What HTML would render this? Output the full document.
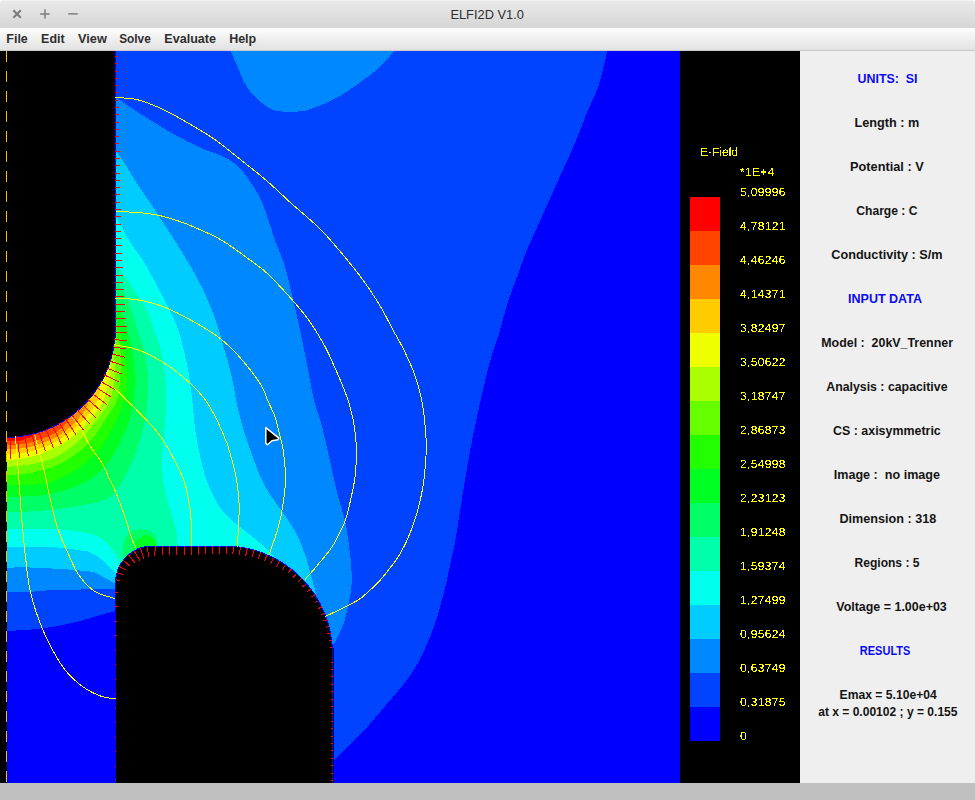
<!DOCTYPE html>
<html><head><meta charset="utf-8"><title>ELFI2D V1.0</title>
<style>
html,body{margin:0;padding:0;}
body{width:975px;height:800px;overflow:hidden;background:#c0c0c0;position:relative;font-family:"Liberation Sans",sans-serif;}
#tbb{position:absolute;left:0;top:0;width:975px;height:10px;background:#fff;}
#tb{position:absolute;left:0;top:0;width:975px;height:28px;background:linear-gradient(#f6f6f6 0px,#e9e9e9 1.5px,#d6d6d6 28px);border-radius:4px 4px 0 0;}
#mb{position:absolute;left:0;top:28px;width:975px;height:22px;background:linear-gradient(#fdfdfd,#e2e2e2);border-bottom:1px solid #c9c9c9;}
#cv{position:absolute;left:0;top:51px;}
#pn{position:absolute;left:800px;top:51px;}
</style></head><body>
<div id="tbb"></div><div id="tb"><svg width="100" height="28" style="position:absolute;left:0;top:0"><g stroke="#7d7d7d" fill="none" stroke-linecap="butt"><path d="M13.3,10.2L20.8,17.7M20.8,10.2L13.3,17.7" stroke-width="2.1"/><path d="M40.2,13.9H49.7M45,9.2V18.5" stroke-width="1.5"/><path d="M68.2,13.9H77.7" stroke-width="1.5"/></g></svg></div>
<div id="mb"></div>
<svg id="tx" width="975" height="51" style="position:absolute;left:0;top:0" font-family="'Liberation Sans', sans-serif">
<text x="450.4" y="19.2" font-size="13.5px" fill="#2e2e2e" textLength="73.6" lengthAdjust="spacingAndGlyphs">ELFI2D V1.0</text>
<g font-size="12.9px" font-weight="bold" fill="#2e2e2e">
<text x="6.3" y="43" textLength="21.5" lengthAdjust="spacingAndGlyphs">File</text>
<text x="41.1" y="43" textLength="23.5" lengthAdjust="spacingAndGlyphs">Edit</text>
<text x="78.1" y="43" textLength="28.7" lengthAdjust="spacingAndGlyphs">View</text>
<text x="119.2" y="43" textLength="31.6" lengthAdjust="spacingAndGlyphs">Solve</text>
<text x="164.3" y="43" textLength="51.7" lengthAdjust="spacingAndGlyphs">Evaluate</text>
<text x="229.2" y="43" textLength="27" lengthAdjust="spacingAndGlyphs">Help</text>
</g></svg>
<svg id="cv" width="800" height="732" viewBox="0 51 800 732" shape-rendering="crispEdges">
<rect x="0" y="51" width="800" height="732" fill="#000"/>
<defs><clipPath id="pc"><rect x="7" y="51" width="673" height="732"/></clipPath></defs>
<g clip-path="url(#pc)">
<rect x="7" y="51" width="673" height="732" fill="#0000ff"/>
<polygon fill="#0044ff" points="7.0,51.0 607.4,51.0 606.5,54.5 605.6,58.2 604.8,61.8 603.9,65.5 603.0,69.1 602.1,72.7 601.2,76.2 600.3,79.6 599.4,82.9 598.4,86.0 597.4,88.9 596.4,91.5 595.4,93.9 594.4,96.2 593.4,98.4 592.3,100.7 591.2,103.0 590.1,105.5 588.9,108.1 587.7,111.0 586.4,114.1 585.1,117.4 583.8,120.9 582.4,124.4 581.0,128.1 579.5,131.8 578.0,135.6 576.5,139.4 574.9,143.2 573.3,147.0 571.6,150.8 569.9,154.8 568.1,158.8 566.2,162.9 564.3,166.9 562.5,171.0 560.6,175.0 558.8,178.9 557.1,182.7 555.4,186.4 553.8,189.9 552.3,193.3 550.8,196.6 549.4,199.8 548.0,203.0 546.6,206.1 545.2,209.2 543.8,212.4 542.4,215.5 541.0,218.7 539.5,221.9 538.1,225.2 536.6,228.5 535.1,231.8 533.6,235.1 532.1,238.3 530.6,241.6 529.2,244.8 527.9,247.9 526.6,251.0 525.4,254.0 524.2,257.0 523.1,260.0 522.0,262.9 521.0,265.8 519.9,268.6 518.9,271.5 518.0,274.2 517.0,277.0 516.0,279.7 515.0,282.4 514.1,285.0 513.1,287.5 512.2,290.1 511.3,292.6 510.4,295.1 509.5,297.5 508.6,300.0 507.8,302.5 507.0,305.0 506.2,307.5 505.5,310.0 504.8,312.4 504.2,314.8 503.5,317.3 502.9,319.7 502.2,322.2 501.5,324.8 500.8,327.4 500.0,330.0 499.2,332.7 498.3,335.5 497.3,338.3 496.4,341.2 495.4,344.1 494.4,347.0 493.5,350.0 492.5,352.9 491.6,355.8 490.8,358.7 490.0,361.6 489.2,364.4 488.5,367.2 487.8,370.0 487.1,372.8 486.4,375.7 485.7,378.5 485.0,381.4 484.3,384.4 483.6,387.4 482.9,390.5 482.2,393.6 481.4,396.7 480.7,399.9 480.0,403.1 479.3,406.3 478.6,409.6 477.8,413.0 477.1,416.3 476.4,419.7 475.7,423.1 475.0,426.5 474.2,430.0 473.5,433.5 472.8,437.0 472.1,440.5 471.4,444.2 470.6,447.9 469.9,451.7 469.2,455.6 468.5,459.6 467.8,463.8 467.0,468.0 466.3,472.3 465.6,476.7 464.9,481.1 464.1,485.5 463.4,490.0 462.7,494.4 462.0,498.7 461.3,503.1 460.5,507.7 459.8,512.4 459.1,517.1 458.3,521.7 457.6,526.2 456.9,530.6 456.2,534.7 455.6,538.4 455.0,541.8 454.5,544.7 454.0,547.0 453.6,549.0 453.3,550.8 452.9,552.3 452.6,553.8 452.2,555.4 451.8,557.1 451.3,559.1 450.8,561.5 450.2,564.2 449.6,567.1 449.0,570.2 448.3,573.3 447.6,576.6 446.9,580.0 446.1,583.4 445.3,586.9 444.5,590.4 443.6,593.8 442.7,597.3 441.7,600.8 440.7,604.4 439.7,608.1 438.7,611.7 437.6,615.4 436.4,619.1 435.2,622.7 434.0,626.2 432.8,629.7 431.5,633.1 430.2,636.6 428.7,640.0 427.3,643.4 425.8,646.7 424.3,650.0 422.8,653.2 421.3,656.3 419.9,659.2 418.4,662.0 417.0,664.6 415.6,667.0 414.2,669.3 412.8,671.4 411.4,673.5 410.0,675.5 408.6,677.5 407.1,679.5 405.6,681.5 404.0,683.6 402.4,685.7 400.7,687.8 399.0,689.9 397.2,692.0 395.4,694.1 393.6,696.2 391.8,698.3 389.9,700.5 388.0,702.7 386.0,705.0 384.0,707.4 381.9,709.9 379.7,712.5 377.5,715.1 375.3,717.7 373.1,720.3 370.9,722.9 368.7,725.4 366.6,727.8 364.6,730.0 362.6,732.1 360.7,734.1 358.8,736.1 357.0,737.9 355.2,739.7 353.4,741.5 351.7,743.2 350.0,744.8 348.3,746.4 346.7,748.0 345.2,749.5 343.7,751.0 342.3,752.4 340.9,753.7 339.6,755.0 338.3,756.3 337.0,757.6 335.7,758.9 334.4,760.2 333.0,761.5 300.0,761.5 200.0,700.0 116.0,611.0 114.3,611.4 112.7,611.9 111.0,612.3 109.4,612.7 107.8,613.2 106.1,613.6 104.4,614.0 102.7,614.5 100.9,615.0 99.0,615.5 97.1,616.0 95.1,616.6 93.1,617.2 91.0,617.8 88.9,618.5 86.8,619.1 84.6,619.7 82.5,620.3 80.2,620.9 78.0,621.5 75.7,622.1 73.4,622.6 71.0,623.2 68.6,623.7 66.2,624.2 63.7,624.8 61.3,625.3 58.8,625.7 56.4,626.2 54.0,626.6 51.6,627.0 49.2,627.4 46.8,627.7 44.4,628.0 41.9,628.3 39.5,628.6 37.1,628.9 34.7,629.1 32.4,629.4 30.0,629.6 27.7,629.8 25.3,630.0 23.0,630.1 20.7,630.3 18.4,630.4 16.2,630.5 13.9,630.6 11.6,630.7 9.3,630.9 7.0,631.0 7.0,51.0"/>
<polygon fill="#0088ff" points="7.0,97.0 115.0,97.0 116.8,98.2 118.6,99.4 120.4,100.6 122.2,101.8 124.0,103.0 125.8,104.2 127.6,105.4 129.4,106.6 131.2,107.8 133.0,109.0 134.8,110.2 136.5,111.3 138.1,112.4 139.8,113.4 141.5,114.5 143.2,115.6 145.0,116.8 146.9,118.0 148.9,119.2 151.0,120.5 153.3,121.9 155.7,123.4 158.2,124.9 160.8,126.5 163.5,128.2 166.2,129.8 169.0,131.4 171.7,133.0 174.4,134.5 177.0,136.0 179.6,137.4 182.2,138.8 184.9,140.2 187.5,141.5 190.1,142.8 192.8,144.1 195.3,145.3 197.8,146.5 200.3,147.6 202.6,148.7 204.9,149.7 207.1,150.5 209.3,151.3 211.4,152.0 213.4,152.7 215.4,153.4 217.4,154.1 219.3,154.8 221.2,155.5 223.0,156.4 224.8,157.3 226.5,158.2 228.1,159.1 229.7,160.0 231.2,161.0 232.8,162.0 234.2,163.1 235.7,164.2 237.1,165.4 238.5,166.7 239.9,168.1 241.2,169.5 242.5,171.1 243.8,172.7 245.1,174.4 246.3,176.1 247.5,177.8 248.7,179.5 249.8,181.3 251.0,183.0 252.1,184.7 253.3,186.4 254.4,188.2 255.5,189.9 256.6,191.7 257.6,193.5 258.6,195.3 259.6,197.2 260.6,199.1 261.5,201.0 262.4,203.0 263.2,205.0 264.0,207.1 264.7,209.2 265.5,211.3 266.2,213.5 266.9,215.6 267.6,217.8 268.3,219.9 269.0,222.0 269.7,224.1 270.4,226.2 271.1,228.2 271.8,230.3 272.4,232.4 273.1,234.5 273.8,236.6 274.5,238.7 275.2,240.8 276.0,243.0 276.8,245.2 277.6,247.3 278.5,249.4 279.4,251.5 280.3,253.7 281.1,255.9 282.0,258.2 282.9,260.5 283.8,263.0 284.6,265.6 285.4,268.3 286.2,271.2 287.0,274.2 287.7,277.2 288.5,280.3 289.3,283.5 290.0,286.7 290.8,289.9 291.5,293.2 292.3,296.4 293.1,299.6 293.8,302.8 294.6,306.0 295.4,309.3 296.1,312.6 296.9,315.9 297.7,319.3 298.5,322.7 299.2,326.2 300.0,329.7 300.8,333.4 301.6,337.1 302.4,341.0 303.1,345.0 303.9,348.9 304.7,352.9 305.5,356.8 306.2,360.7 307.0,364.4 307.7,368.0 308.4,371.5 309.0,374.9 309.6,378.3 310.2,381.6 310.8,384.8 311.4,388.0 312.0,391.1 312.7,394.1 313.3,397.1 314.0,400.0 314.7,402.8 315.5,405.4 316.2,407.9 317.0,410.3 317.8,412.7 318.6,415.1 319.4,417.5 320.2,420.1 321.0,422.8 321.8,425.6 322.6,428.6 323.3,431.8 324.1,435.0 324.9,438.4 325.7,441.8 326.4,445.3 327.2,448.7 328.0,452.2 328.7,455.6 329.5,459.0 330.3,462.4 331.0,465.7 331.8,469.2 332.5,472.6 333.2,476.0 334.0,479.4 334.7,482.7 335.5,486.0 336.2,489.2 337.0,492.3 337.8,495.3 338.6,498.3 339.5,501.3 340.3,504.2 341.2,507.0 342.0,509.8 342.8,512.6 343.6,515.3 344.3,517.9 344.9,520.5 345.5,523.0 345.9,525.4 346.4,527.8 346.8,530.1 347.1,532.4 347.5,534.6 347.8,536.8 348.1,539.1 348.4,541.3 348.7,543.6 349.0,545.9 349.3,548.3 349.6,550.7 349.9,553.1 350.2,555.5 350.5,557.8 350.7,560.1 351.0,562.4 351.1,564.6 351.3,566.7 351.4,568.8 351.5,570.8 351.6,572.8 351.6,574.7 351.7,576.6 351.7,578.4 351.6,580.2 351.6,581.9 351.6,583.5 351.5,585.0 351.4,586.3 351.4,587.5 351.3,588.5 351.2,589.3 351.1,590.2 350.9,591.1 350.8,592.0 350.6,593.1 350.3,594.4 350.0,596.0 349.7,597.8 349.3,599.9 348.8,602.2 348.4,604.6 347.9,607.1 347.3,609.6 346.8,612.1 346.2,614.5 345.6,616.8 345.0,619.0 344.4,621.0 343.7,623.1 342.9,625.1 342.2,627.0 341.4,628.9 340.6,630.7 339.8,632.4 339.1,634.1 338.4,635.6 337.7,637.0 337.1,638.3 336.5,639.4 335.9,640.4 335.4,641.2 334.9,642.1 334.4,642.8 333.9,643.6 333.3,644.3 332.8,645.1 332.3,646.0 300.0,650.0 200.0,620.0 116.0,588.5 112.8,588.6 109.6,588.7 106.3,588.8 103.1,588.9 99.9,589.0 96.7,589.1 93.5,589.2 90.3,589.2 87.1,589.3 84.0,589.4 80.9,589.5 77.8,589.5 74.7,589.6 71.6,589.6 68.5,589.6 65.5,589.7 62.5,589.7 59.6,589.8 56.7,589.9 54.0,590.0 51.4,590.1 48.8,590.3 46.3,590.5 43.9,590.7 41.6,590.9 39.2,591.1 36.9,591.3 34.6,591.5 32.3,591.7 30.0,591.8 27.7,591.9 25.3,592.0 23.0,592.1 20.7,592.1 18.4,592.2 16.2,592.2 13.9,592.3 11.6,592.3 9.3,592.3 7.0,592.4 7.0,97.0"/>
<polygon fill="#0088ff" points="230.7,51.0 231.4,52.5 232.0,54.0 232.7,55.6 233.4,57.1 234.0,58.6 234.7,60.1 235.4,61.6 236.1,63.2 236.8,64.8 237.5,66.4 238.2,68.1 239.0,69.9 239.7,71.7 240.5,73.5 241.2,75.4 242.0,77.2 242.8,79.0 243.6,80.8 244.4,82.4 245.3,84.0 246.2,85.5 247.1,86.9 248.0,88.3 248.9,89.6 249.9,90.8 250.9,92.1 251.9,93.3 252.9,94.4 253.9,95.6 255.0,96.7 256.1,97.8 257.3,98.9 258.5,100.0 259.7,101.0 260.9,102.1 262.1,103.0 263.3,104.0 264.5,104.8 265.7,105.7 266.8,106.4 267.8,107.1 268.8,107.7 269.7,108.3 270.6,108.8 271.5,109.2 272.4,109.6 273.4,110.0 274.4,110.3 275.4,110.6 276.5,110.9 277.7,111.1 279.0,111.3 280.3,111.4 281.6,111.5 283.0,111.5 284.4,111.5 285.8,111.5 287.2,111.5 288.6,111.5 290.0,111.5 291.4,111.5 292.7,111.5 294.1,111.5 295.5,111.5 296.9,111.5 298.3,111.5 299.7,111.4 301.0,111.3 302.4,111.1 303.8,110.9 305.1,110.6 306.5,110.3 307.7,110.0 309.0,109.6 310.3,109.2 311.6,108.7 313.0,108.2 314.4,107.6 315.9,107.0 317.5,106.4 319.2,105.7 321.0,105.0 322.9,104.2 324.9,103.4 326.9,102.5 328.9,101.6 331.0,100.7 333.0,99.7 335.0,98.7 337.0,97.6 338.9,96.5 340.9,95.4 342.9,94.2 344.8,92.9 346.8,91.7 348.7,90.4 350.6,89.1 352.6,87.7 354.6,86.4 356.5,85.0 358.5,83.6 360.5,82.1 362.6,80.6 364.7,79.1 366.7,77.6 368.8,76.1 370.7,74.6 372.6,73.1 374.4,71.7 376.0,70.3 377.5,69.0 378.9,67.7 380.2,66.4 381.4,65.2 382.6,64.0 383.7,62.8 384.7,61.7 385.7,60.6 386.7,59.6 387.6,58.6 388.5,57.7 389.3,56.8 390.0,56.0 390.7,55.3 391.3,54.5 392.0,53.8 392.6,53.2 393.2,52.5 393.8,51.7 394.5,51.0 394.5,40.0 230.7,40.0"/>
<polygon fill="#00ccff" points="7.0,148.7 115.0,148.7 116.0,150.3 117.1,151.9 118.1,153.4 119.1,155.0 120.2,156.6 121.2,158.1 122.3,159.8 123.3,161.4 124.4,163.2 125.6,165.0 126.8,166.9 128.0,168.9 129.3,171.0 130.6,173.2 131.9,175.4 133.3,177.6 134.6,179.8 135.9,181.9 137.2,184.0 138.5,186.0 139.8,187.9 141.0,189.8 142.3,191.6 143.5,193.3 144.7,195.1 146.0,196.8 147.2,198.5 148.5,200.3 149.7,202.1 151.0,204.0 152.3,205.9 153.6,207.9 154.9,210.0 156.3,212.0 157.6,214.1 159.0,216.2 160.3,218.2 161.6,220.2 162.8,222.2 164.0,224.0 165.1,225.7 166.2,227.4 167.2,229.0 168.2,230.5 169.2,232.0 170.2,233.5 171.2,235.0 172.2,236.6 173.3,238.2 174.4,240.0 175.6,241.8 176.7,243.7 177.9,245.6 179.1,247.5 180.4,249.5 181.6,251.5 182.9,253.6 184.3,255.8 185.6,258.1 187.0,260.5 188.5,263.0 190.0,265.6 191.5,268.3 193.2,271.1 194.8,274.0 196.4,276.9 198.0,279.8 199.6,282.8 201.1,285.7 202.6,288.7 204.0,291.7 205.4,294.8 206.8,297.9 208.2,301.1 209.5,304.3 210.8,307.4 212.0,310.6 213.2,313.6 214.3,316.6 215.4,319.5 216.4,322.3 217.2,324.9 218.1,327.5 218.8,330.0 219.5,332.4 220.2,334.9 220.9,337.3 221.6,339.8 222.3,342.4 223.0,345.0 223.8,347.7 224.6,350.4 225.4,353.1 226.2,355.9 227.0,358.7 227.8,361.5 228.6,364.3 229.3,367.2 230.1,370.1 230.8,373.0 231.5,376.0 232.2,379.2 232.8,382.4 233.4,385.6 234.1,388.9 234.7,392.1 235.3,395.3 235.8,398.4 236.4,401.3 237.0,404.0 237.5,406.5 238.0,408.8 238.5,410.9 238.9,412.9 239.4,414.8 239.9,416.7 240.4,418.7 240.9,420.8 241.6,423.1 242.3,425.6 243.1,428.3 244.0,431.3 245.0,434.3 246.1,437.5 247.1,440.8 248.2,444.0 249.4,447.3 250.5,450.4 251.6,453.5 252.6,456.4 253.6,459.2 254.6,461.9 255.6,464.6 256.6,467.3 257.5,469.8 258.5,472.4 259.6,474.9 260.6,477.3 261.7,479.7 262.8,482.0 264.0,484.3 265.2,486.5 266.4,488.6 267.7,490.7 269.0,492.8 270.3,494.8 271.7,496.8 273.0,498.7 274.3,500.7 275.6,502.6 276.9,504.5 278.2,506.4 279.5,508.2 280.9,509.9 282.2,511.7 283.5,513.5 284.8,515.2 286.1,517.0 287.3,518.7 288.5,520.5 289.6,522.3 290.8,524.1 291.8,525.8 292.9,527.6 293.9,529.3 294.9,531.1 295.9,532.9 296.9,534.7 297.8,536.6 298.7,538.5 299.6,540.5 300.4,542.5 301.3,544.5 302.1,546.6 302.9,548.8 303.6,550.9 304.4,553.0 305.1,555.0 305.7,557.0 306.4,559.0 307.0,560.9 307.6,562.8 308.1,564.6 308.7,566.4 309.1,568.2 309.6,570.0 310.1,571.8 310.6,573.5 311.0,575.3 311.5,577.0 312.0,578.7 312.4,580.5 312.9,582.2 313.3,583.9 313.8,585.6 314.2,587.2 314.7,588.9 315.1,590.6 315.6,592.3 316.0,594.0 290.0,600.0 200.0,600.0 116.0,584.0 115.0,583.5 114.0,582.9 113.0,582.4 112.1,581.9 111.1,581.4 110.1,580.8 109.1,580.3 108.1,579.8 107.2,579.3 106.2,578.8 105.3,578.2 104.4,577.7 103.5,577.1 102.6,576.6 101.7,576.1 100.9,575.5 100.0,575.0 99.2,574.6 98.3,574.1 97.5,573.8 96.8,573.4 96.3,573.1 95.9,572.9 95.5,572.7 95.1,572.5 94.6,572.3 93.9,572.1 92.9,571.9 91.7,571.7 90.0,571.5 87.9,571.3 85.4,571.0 82.7,570.7 79.6,570.5 76.4,570.2 73.1,569.9 69.7,569.7 66.4,569.4 63.1,569.2 60.0,569.0 57.0,568.8 53.9,568.6 50.8,568.4 47.7,568.3 44.6,568.1 41.5,567.9 38.5,567.8 35.6,567.7 32.7,567.6 30.0,567.5 27.4,567.4 25.0,567.4 22.6,567.4 20.3,567.4 18.1,567.4 15.9,567.4 13.7,567.5 11.5,567.5 9.3,567.5 7.0,567.5 7.0,148.7"/>
<polygon fill="#00ffee" points="7.0,214.0 115.0,214.0 116.0,215.9 117.0,217.9 118.1,219.9 119.1,221.9 120.2,223.9 121.2,225.9 122.2,227.8 123.2,229.6 124.1,231.4 125.0,233.0 125.8,234.5 126.5,235.8 127.2,237.0 127.8,238.2 128.5,239.2 129.1,240.3 129.7,241.4 130.4,242.5 131.2,243.7 132.0,245.0 132.9,246.4 133.9,247.8 135.0,249.2 136.0,250.6 137.2,252.1 138.3,253.6 139.4,255.2 140.5,256.8 141.6,258.4 142.7,260.0 143.7,261.7 144.8,263.4 145.8,265.2 146.8,267.0 147.8,268.8 148.8,270.7 149.8,272.5 150.8,274.4 151.8,276.2 152.8,278.0 153.8,279.8 154.8,281.6 155.8,283.4 156.7,285.2 157.7,287.1 158.7,288.9 159.6,290.7 160.6,292.5 161.5,294.2 162.4,296.0 163.3,297.7 164.2,299.5 165.1,301.2 165.9,302.9 166.8,304.6 167.6,306.2 168.5,307.9 169.3,309.6 170.1,311.3 170.9,313.0 171.7,314.7 172.5,316.4 173.3,318.0 174.0,319.7 174.8,321.3 175.6,323.0 176.3,324.7 177.0,326.4 177.7,328.2 178.3,330.0 178.9,331.8 179.5,333.7 180.0,335.7 180.6,337.6 181.1,339.6 181.6,341.6 182.1,343.6 182.5,345.6 183.0,347.5 183.5,349.5 184.0,351.4 184.5,353.4 184.9,355.3 185.4,357.2 185.9,359.2 186.3,361.1 186.8,363.0 187.2,365.0 187.6,367.0 188.0,369.0 188.4,371.0 188.7,373.1 189.0,375.2 189.3,377.4 189.6,379.5 189.9,381.6 190.2,383.8 190.5,385.9 190.7,388.0 191.0,390.0 191.3,392.0 191.5,394.0 191.7,396.0 192.0,397.9 192.2,399.8 192.4,401.8 192.6,403.7 192.8,405.6 193.0,407.6 193.2,409.5 193.4,411.5 193.6,413.5 193.8,415.6 194.0,417.7 194.1,419.8 194.3,421.8 194.5,423.8 194.6,425.6 194.8,427.4 195.0,429.0 195.2,430.4 195.4,431.7 195.6,432.9 195.8,434.0 196.0,435.0 196.2,436.0 196.4,437.0 196.6,437.9 196.8,438.9 197.0,440.0 197.2,441.0 197.3,442.0 197.5,442.8 197.6,443.7 197.7,444.6 197.9,445.5 198.1,446.6 198.3,447.8 198.6,449.3 199.0,451.0 199.4,453.0 199.9,455.2 200.5,457.7 201.1,460.3 201.7,463.1 202.3,465.9 203.1,468.8 203.8,471.6 204.6,474.3 205.5,477.0 206.4,479.6 207.4,482.3 208.5,485.0 209.6,487.8 210.7,490.5 211.9,493.1 213.1,495.7 214.3,498.1 215.5,500.5 216.7,502.6 217.9,504.6 219.1,506.4 220.3,508.1 221.6,509.6 222.8,511.1 224.1,512.5 225.4,513.9 226.7,515.2 228.1,516.6 229.5,518.0 230.9,519.4 232.5,520.8 234.0,522.1 235.6,523.4 237.2,524.7 238.8,526.0 240.4,527.2 241.9,528.4 243.5,529.6 244.9,530.8 246.3,531.9 247.6,533.0 248.9,534.0 250.2,535.0 251.5,536.0 252.7,536.9 253.9,537.9 255.2,538.9 256.4,539.9 257.7,541.0 259.0,542.1 260.3,543.2 261.7,544.4 263.1,545.5 264.4,546.7 265.8,547.9 267.0,549.1 268.3,550.3 269.4,551.4 270.5,552.6 271.5,553.7 272.3,554.9 273.1,556.0 273.9,557.2 274.6,558.3 275.3,559.4 275.9,560.6 276.6,561.7 277.3,562.9 278.0,564.0 260.0,575.0 180.0,575.0 116.0,573.8 115.7,573.4 115.4,573.1 115.1,572.7 114.8,572.4 114.5,572.1 114.2,571.8 113.8,571.4 113.5,571.0 113.0,570.5 112.5,570.0 111.9,569.4 111.3,568.7 110.5,568.0 109.8,567.2 109.0,566.4 108.2,565.6 107.4,564.8 106.6,564.0 105.8,563.2 105.0,562.5 104.2,561.8 103.5,561.1 102.8,560.5 102.0,559.8 101.2,559.1 100.5,558.5 99.8,557.9 99.0,557.3 98.2,556.8 97.5,556.2 96.7,555.8 96.0,555.3 95.2,554.9 94.4,554.5 93.6,554.1 92.8,553.7 92.1,553.4 91.4,553.1 90.7,552.8 90.0,552.5 89.5,552.3 89.2,552.1 89.1,552.0 89.0,551.9 88.9,551.8 88.7,551.7 88.2,551.6 87.5,551.4 86.3,551.2 84.6,551.0 82.4,550.7 79.9,550.3 76.9,549.9 73.7,549.4 70.2,548.9 66.5,548.5 62.7,548.0 58.8,547.6 54.9,547.3 51.0,547.0 47.0,546.8 42.9,546.7 38.6,546.6 34.1,546.5 29.6,546.5 25.1,546.5 20.5,546.5 16.0,546.5 11.4,546.5 7.0,546.5 7.0,214.0"/>
<polygon fill="#00ffaa" points="7.0,256.0 115.0,256.0 115.6,257.5 116.2,259.0 116.8,260.5 117.3,262.0 117.9,263.6 118.5,265.1 119.1,266.5 119.7,267.9 120.3,269.3 121.0,270.6 121.7,271.8 122.4,272.9 123.1,274.0 123.9,275.0 124.6,276.0 125.4,276.9 126.1,277.9 126.9,278.9 127.7,279.9 128.4,281.0 129.1,282.1 129.9,283.3 130.7,284.6 131.4,285.8 132.2,287.1 132.9,288.3 133.7,289.5 134.4,290.7 135.1,291.9 135.8,293.0 136.5,294.0 137.1,295.0 137.8,295.9 138.4,296.8 139.0,297.7 139.7,298.6 140.3,299.5 140.9,300.4 141.5,301.4 142.2,302.5 142.9,303.6 143.6,304.8 144.3,306.0 145.0,307.2 145.7,308.4 146.4,309.7 147.1,311.0 147.7,312.3 148.4,313.6 149.0,315.0 149.6,316.4 150.1,317.8 150.6,319.3 151.1,320.8 151.6,322.3 152.1,323.9 152.5,325.4 153.0,327.0 153.5,328.5 154.0,330.0 154.5,331.5 155.1,333.0 155.7,334.4 156.2,335.9 156.8,337.3 157.4,338.8 158.0,340.3 158.5,341.8 159.0,343.4 159.5,345.0 160.0,346.7 160.4,348.4 160.8,350.2 161.2,352.0 161.6,353.8 161.9,355.7 162.3,357.5 162.6,359.4 162.9,361.2 163.2,363.0 163.5,364.8 163.8,366.6 164.1,368.4 164.3,370.2 164.6,372.0 164.8,373.8 165.0,375.6 165.2,377.4 165.3,379.2 165.5,381.0 165.6,382.8 165.8,384.6 165.9,386.4 166.0,388.2 166.1,390.0 166.1,391.8 166.2,393.6 166.2,395.4 166.2,397.2 166.2,399.0 166.2,400.8 166.2,402.6 166.2,404.4 166.1,406.2 166.0,408.0 165.9,409.8 165.8,411.6 165.7,413.4 165.6,415.2 165.5,417.0 165.4,418.8 165.2,420.6 165.1,422.5 165.0,424.3 164.8,426.2 164.6,428.0 164.5,429.8 164.3,431.6 164.2,433.3 164.0,435.0 163.8,436.6 163.7,438.0 163.5,439.3 163.3,440.6 163.1,441.9 163.0,443.3 162.8,444.7 162.7,446.3 162.6,448.0 162.5,450.0 162.4,452.2 162.4,454.7 162.3,457.3 162.3,460.0 162.2,462.8 162.2,465.7 162.3,468.6 162.4,471.5 162.6,474.3 162.8,477.0 163.1,479.6 163.5,482.2 163.9,484.8 164.4,487.4 164.9,489.9 165.5,492.4 166.1,495.0 166.7,497.5 167.4,500.1 168.0,502.6 168.7,505.2 169.5,507.8 170.3,510.5 171.1,513.1 172.0,515.8 172.8,518.4 173.6,520.9 174.4,523.4 175.1,525.8 175.6,528.0 176.0,530.1 176.4,532.1 176.6,533.9 176.8,535.7 177.0,537.5 177.1,539.2 177.2,540.8 177.4,542.5 177.5,544.2 177.7,546.0 170.0,560.0 119.4,565.0 119.4,564.5 119.4,564.1 119.4,563.7 119.4,563.2 119.4,562.8 119.4,562.4 119.4,561.9 119.2,561.3 119.0,560.7 118.8,560.0 118.4,559.2 117.9,558.3 117.3,557.3 116.7,556.3 116.1,555.2 115.4,554.1 114.6,553.1 113.9,552.0 113.2,551.0 112.5,550.0 111.8,549.1 111.1,548.1 110.3,547.2 109.6,546.2 108.8,545.3 108.1,544.4 107.3,543.6 106.5,542.7 105.8,542.0 105.0,541.2 104.2,540.6 103.5,540.0 102.8,539.4 102.0,538.9 101.2,538.4 100.5,537.9 99.8,537.4 99.0,537.0 98.2,536.6 97.5,536.2 96.8,535.9 96.2,535.6 95.6,535.3 95.1,535.1 94.5,534.9 93.9,534.7 93.2,534.5 92.3,534.3 91.3,534.0 90.0,533.8 88.5,533.4 86.8,533.1 84.9,532.8 82.9,532.4 80.7,532.1 78.5,531.7 76.3,531.4 74.1,531.1 72.0,530.8 70.0,530.5 68.2,530.3 66.5,530.1 65.0,529.9 63.5,529.7 62.0,529.5 60.4,529.4 58.5,529.3 56.4,529.2 53.9,529.1 51.0,529.0 47.6,528.9 43.8,528.9 39.6,528.9 35.2,528.9 30.6,528.9 25.8,528.9 21.0,529.0 16.2,529.0 11.5,529.0 7.0,529.0 7.0,256.0"/>
<polygon fill="#00ff66" points="7.0,279.0 115.0,279.0 115.5,279.7 116.0,280.4 116.5,281.0 117.0,281.7 117.5,282.4 118.0,283.1 118.5,283.8 119.0,284.5 119.5,285.2 120.0,286.0 120.5,286.8 121.0,287.6 121.5,288.5 122.0,289.4 122.5,290.2 123.0,291.2 123.5,292.1 124.0,293.0 124.5,294.0 125.0,295.0 125.5,296.0 126.0,297.1 126.5,298.1 127.0,299.2 127.6,300.3 128.1,301.4 128.6,302.6 129.1,303.7 129.5,304.9 130.0,306.0 130.4,307.2 130.9,308.3 131.3,309.5 131.7,310.7 132.1,311.9 132.5,313.2 132.9,314.4 133.2,315.6 133.6,316.8 134.0,318.0 134.4,319.2 134.7,320.4 135.1,321.5 135.4,322.7 135.7,323.8 136.1,325.0 136.4,326.2 136.8,327.4 137.2,328.7 137.6,330.0 138.0,331.4 138.5,332.8 139.0,334.3 139.5,335.8 140.1,337.3 140.6,338.9 141.1,340.4 141.6,342.0 142.1,343.5 142.5,345.0 142.9,346.5 143.3,348.0 143.7,349.5 144.1,351.0 144.4,352.5 144.8,354.0 145.1,355.5 145.4,357.0 145.7,358.5 146.0,360.0 146.3,361.5 146.5,363.0 146.8,364.5 147.0,366.0 147.2,367.5 147.4,369.0 147.6,370.5 147.7,372.0 147.9,373.5 148.0,375.0 148.1,376.5 148.2,377.9 148.3,379.3 148.3,380.7 148.4,382.1 148.4,383.6 148.4,385.1 148.4,386.6 148.3,388.3 148.2,390.0 148.2,391.9 148.0,393.9 147.9,396.1 147.7,398.3 147.5,400.6 147.3,402.8 147.1,405.0 146.9,407.2 146.7,409.2 146.5,411.0 146.3,412.7 146.1,414.2 145.9,415.7 145.6,417.1 145.4,418.4 145.1,419.7 144.9,420.9 144.6,422.2 144.3,423.6 144.0,425.0 143.7,426.5 143.3,428.0 142.9,429.5 142.5,431.0 142.1,432.6 141.7,434.1 141.2,435.7 140.8,437.1 140.4,438.6 140.0,440.0 139.6,441.3 139.3,442.6 138.9,443.9 138.6,445.1 138.3,446.3 137.9,447.5 137.6,448.8 137.2,450.0 136.7,451.2 136.2,452.5 135.7,453.8 135.2,455.1 134.6,456.5 133.9,457.9 133.3,459.2 132.6,460.6 132.0,462.0 131.3,463.3 130.6,464.7 130.0,466.0 129.4,467.3 128.8,468.6 128.1,470.0 127.5,471.3 126.9,472.6 126.2,473.9 125.6,475.2 125.0,476.4 124.4,477.6 123.8,478.8 123.1,479.9 122.5,481.0 121.8,482.1 121.2,483.1 120.5,484.2 119.9,485.2 119.3,486.1 118.7,487.0 118.1,487.9 117.5,488.8 117.0,489.5 116.5,490.3 116.1,490.9 115.6,491.6 115.2,492.2 114.8,492.7 114.3,493.3 113.8,493.9 113.2,494.4 112.5,495.0 111.7,495.6 110.8,496.2 109.9,496.8 108.9,497.4 107.9,498.0 106.8,498.6 105.7,499.1 104.7,499.6 103.6,500.1 102.5,500.6 101.4,501.0 100.3,501.4 99.2,501.8 98.1,502.1 97.0,502.4 95.8,502.7 94.7,503.0 93.5,503.2 92.4,503.5 91.2,503.8 90.1,504.0 89.0,504.2 88.0,504.4 86.9,504.6 85.8,504.7 84.7,504.9 83.6,505.0 82.4,505.2 81.2,505.4 80.0,505.6 78.7,505.8 77.5,506.1 76.1,506.3 74.8,506.5 73.4,506.8 72.0,507.0 70.6,507.3 69.2,507.5 67.7,507.8 66.2,508.0 64.7,508.2 63.2,508.4 61.7,508.6 60.1,508.9 58.5,509.1 56.9,509.3 55.2,509.4 53.5,509.6 51.8,509.8 50.0,510.0 48.2,510.2 46.3,510.3 44.4,510.5 42.4,510.7 40.4,510.8 38.4,511.0 36.3,511.1 34.3,511.3 32.1,511.4 30.0,511.5 27.8,511.6 25.6,511.7 23.3,511.7 21.0,511.8 18.7,511.8 16.3,511.8 14.0,511.9 11.6,511.9 9.3,512.0 7.0,512.0 7.0,279.0"/>
<polygon fill="#00ff66" points="122.6,560.0 122.6,558.7 122.6,557.4 122.6,556.1 122.6,554.8 122.6,553.4 122.6,552.1 122.6,550.9 122.6,549.7 122.7,548.5 122.8,547.5 122.8,546.5 122.9,545.7 123.0,544.8 123.2,544.1 123.3,543.4 123.5,542.7 123.7,542.0 123.9,541.3 124.1,540.7 124.4,540.0 124.7,539.3 125.1,538.6 125.4,538.0 125.9,537.3 126.3,536.6 126.7,536.0 127.2,535.4 127.7,534.8 128.2,534.3 128.8,533.8 129.3,533.3 129.9,532.8 130.4,532.3 131.1,531.9 131.7,531.5 132.3,531.1 133.0,530.8 133.6,530.5 134.3,530.2 135.0,530.0 135.7,529.8 136.4,529.7 137.2,529.5 137.9,529.4 138.7,529.4 139.4,529.4 140.2,529.4 141.0,529.4 141.7,529.4 142.5,529.5 143.3,529.6 144.0,529.7 144.8,529.8 145.6,530.0 146.4,530.2 147.2,530.4 147.9,530.6 148.7,530.9 149.4,531.2 150.0,531.5 150.6,531.8 151.2,532.2 151.8,532.7 152.3,533.1 152.8,533.6 153.3,534.0 153.8,534.5 154.2,535.0 154.6,535.5 155.0,536.0 155.3,536.5 155.6,537.0 155.9,537.5 156.1,538.0 156.3,538.5 156.5,539.0 156.6,539.5 156.8,540.0 156.9,540.5 157.0,541.0 157.1,541.5 157.1,542.0 157.1,542.6 157.1,543.1 157.1,543.6 157.1,544.1 157.1,544.7 157.0,545.2 157.0,545.7 157.0,546.2 150.0,560.0"/>
<polygon fill="#00ff22" points="7.0,302.0 115.0,302.5 115.4,303.1 115.8,303.8 116.2,304.4 116.6,305.0 117.0,305.6 117.4,306.2 117.8,306.9 118.2,307.5 118.6,308.2 119.0,309.0 119.4,309.8 119.8,310.6 120.2,311.4 120.6,312.3 121.0,313.2 121.4,314.1 121.8,315.0 122.2,316.0 122.6,317.0 123.0,318.0 123.4,319.1 123.8,320.2 124.2,321.3 124.6,322.4 125.0,323.6 125.4,324.8 125.8,326.1 126.2,327.4 126.6,328.7 127.0,330.0 127.4,331.4 127.8,332.8 128.2,334.2 128.6,335.7 129.1,337.2 129.5,338.7 129.9,340.3 130.3,341.8 130.6,343.4 131.0,345.0 131.4,346.6 131.7,348.3 132.0,349.9 132.4,351.6 132.7,353.3 133.0,355.0 133.3,356.8 133.6,358.5 133.8,360.3 134.0,362.0 134.2,363.8 134.3,365.7 134.4,367.6 134.5,369.5 134.6,371.4 134.6,373.3 134.7,375.2 134.7,376.9 134.7,378.5 134.8,380.0 134.8,381.3 134.8,382.4 134.8,383.3 134.8,384.2 134.8,385.0 134.8,385.8 134.7,386.7 134.7,387.6 134.6,388.7 134.5,390.0 134.4,391.5 134.3,393.1 134.1,394.9 133.9,396.7 133.8,398.6 133.6,400.6 133.3,402.5 133.1,404.4 132.8,406.2 132.5,408.0 132.2,409.7 131.8,411.3 131.4,412.9 131.0,414.5 130.5,416.1 130.1,417.7 129.6,419.3 129.1,420.8 128.6,422.4 128.0,424.0 127.4,425.6 126.8,427.3 126.1,429.0 125.4,430.7 124.7,432.4 123.9,434.0 123.2,435.6 122.5,437.2 121.9,438.6 121.2,440.0 120.7,441.2 120.2,442.4 119.7,443.4 119.2,444.4 118.7,445.4 118.3,446.3 117.8,447.2 117.3,448.1 116.8,449.0 116.2,450.0 115.7,451.0 115.1,452.0 114.5,453.0 113.9,454.1 113.3,455.1 112.7,456.1 112.0,457.1 111.3,458.1 110.7,459.1 110.0,460.0 109.3,460.9 108.6,461.8 107.9,462.7 107.2,463.6 106.5,464.5 105.7,465.3 105.0,466.2 104.2,467.0 103.4,467.9 102.5,468.8 101.6,469.6 100.7,470.5 99.7,471.5 98.7,472.4 97.7,473.3 96.7,474.2 95.7,475.1 94.6,475.9 93.6,476.7 92.5,477.5 91.4,478.2 90.3,478.9 89.3,479.6 88.2,480.2 87.0,480.9 85.9,481.5 84.8,482.0 83.6,482.6 82.4,483.2 81.2,483.8 80.1,484.3 78.8,484.9 77.6,485.4 76.3,485.9 75.1,486.4 73.8,486.9 72.5,487.4 71.3,487.9 70.0,488.3 68.8,488.8 67.5,489.2 66.3,489.6 65.1,490.0 63.9,490.4 62.7,490.8 61.5,491.1 60.3,491.5 59.0,491.8 57.7,492.2 56.2,492.5 54.9,492.8 53.5,493.2 52.2,493.5 50.8,493.8 49.4,494.1 47.9,494.4 46.2,494.7 44.4,495.0 42.3,495.3 40.0,495.5 37.4,495.7 34.5,495.9 31.3,496.1 28.0,496.2 24.5,496.3 21.0,496.5 17.4,496.6 13.9,496.7 10.4,496.9 7.0,497.0 7.0,302.0"/>
<polygon fill="#00ff22" points="134.6,550.0 134.7,549.2 134.9,548.3 135.0,547.4 135.1,546.6 135.2,545.7 135.4,544.9 135.5,544.0 135.6,543.3 135.8,542.6 136.0,542.0 136.2,541.5 136.4,541.1 136.6,540.7 136.7,540.4 136.9,540.1 137.2,539.9 137.5,539.6 137.8,539.4 138.2,539.1 138.6,538.8 139.1,538.4 139.7,538.0 140.4,537.6 141.1,537.1 141.8,536.7 142.6,536.3 143.4,535.9 144.1,535.6 144.9,535.4 145.6,535.3 146.3,535.3 147.1,535.4 147.8,535.6 148.6,535.8 149.4,536.1 150.1,536.4 150.8,536.8 151.5,537.2 152.1,537.5 152.6,537.9 153.1,538.3 153.5,538.7 153.9,539.1 154.2,539.5 154.5,540.0 154.7,540.5 155.0,540.9 155.2,541.4 155.3,541.9 155.5,542.3 155.6,542.7 155.7,543.2 155.8,543.6 155.8,544.0 155.8,544.4 155.8,544.8 155.8,545.2 155.8,545.7 155.8,546.1 155.8,546.5 145.0,555.0"/>
<polygon fill="#22ff00" points="7.0,321.0 115.0,321.6 115.3,322.0 115.6,322.4 115.9,322.8 116.2,323.2 116.5,323.6 116.8,324.1 117.1,324.5 117.4,325.0 117.7,325.5 118.0,326.0 118.3,326.6 118.6,327.2 118.9,327.8 119.2,328.4 119.5,329.0 119.8,329.7 120.1,330.5 120.4,331.2 120.7,332.1 121.0,333.0 121.3,334.0 121.6,335.0 121.9,336.1 122.2,337.3 122.6,338.5 122.9,339.7 123.2,341.0 123.5,342.3 123.7,343.7 124.0,345.0 124.2,346.4 124.5,347.8 124.7,349.3 124.9,350.8 125.2,352.3 125.4,353.9 125.5,355.4 125.7,357.0 125.9,358.5 126.0,360.0 126.1,361.5 126.2,363.0 126.3,364.5 126.4,366.0 126.4,367.5 126.4,369.0 126.5,370.5 126.5,372.0 126.5,373.5 126.5,375.0 126.5,376.5 126.6,377.9 126.6,379.3 126.6,380.6 126.7,382.0 126.6,383.5 126.6,384.9 126.5,386.5 126.3,388.2 126.0,390.0 125.6,392.0 125.1,394.2 124.6,396.5 124.0,399.0 123.3,401.5 122.6,403.9 121.9,406.3 121.3,408.6 120.6,410.7 120.0,412.5 119.4,414.1 118.8,415.6 118.2,416.9 117.7,418.2 117.1,419.3 116.5,420.3 116.0,421.3 115.4,422.2 115.0,423.1 114.5,424.0 114.1,424.8 113.8,425.5 113.5,426.0 113.2,426.5 112.9,427.0 112.7,427.5 112.4,428.0 112.1,428.6 111.7,429.2 111.2,430.0 110.8,430.9 110.2,431.9 109.6,433.0 109.0,434.2 108.4,435.4 107.7,436.6 107.1,437.8 106.4,439.0 105.7,440.2 105.0,441.2 104.3,442.3 103.6,443.3 102.9,444.3 102.2,445.3 101.5,446.3 100.7,447.3 100.0,448.3 99.2,449.3 98.4,450.3 97.5,451.2 96.6,452.3 95.7,453.3 94.7,454.3 93.7,455.4 92.7,456.4 91.6,457.4 90.6,458.4 89.5,459.4 88.5,460.4 87.5,461.2 86.5,462.1 85.5,462.9 84.6,463.7 83.6,464.4 82.7,465.2 81.7,465.9 80.7,466.6 79.7,467.3 78.6,468.0 77.5,468.8 76.4,469.5 75.2,470.3 74.0,471.0 72.8,471.8 71.6,472.6 70.3,473.3 69.0,474.1 67.7,474.8 66.4,475.6 65.0,476.2 63.6,476.9 62.2,477.6 60.8,478.3 59.4,479.0 58.0,479.7 56.5,480.3 54.9,480.9 53.4,481.5 51.7,482.0 50.0,482.5 48.2,482.9 46.4,483.3 44.5,483.6 42.5,483.9 40.5,484.1 38.5,484.3 36.4,484.5 34.3,484.7 32.1,484.8 30.0,485.0 27.8,485.1 25.6,485.2 23.3,485.3 21.0,485.3 18.7,485.4 16.3,485.4 14.0,485.4 11.6,485.4 9.3,485.5 7.0,485.5 7.0,321.0"/>
<polygon fill="#66ff00" points="7.0,330.0 115.0,334.4 115.4,335.0 115.8,335.7 116.2,336.3 116.6,337.0 117.1,337.6 117.5,338.3 117.9,338.9 118.2,339.5 118.5,340.2 118.8,340.8 119.0,341.4 119.2,341.9 119.4,342.5 119.5,343.0 119.6,343.5 119.7,344.0 119.8,344.6 119.8,345.3 119.9,346.1 120.0,347.0 120.1,348.0 120.2,349.1 120.3,350.3 120.4,351.6 120.5,352.9 120.6,354.3 120.7,355.7 120.7,357.2 120.8,358.6 120.8,360.0 120.8,361.4 120.8,362.9 120.8,364.4 120.8,365.9 120.8,367.4 120.8,368.9 120.7,370.4 120.7,372.0 120.6,373.5 120.5,375.0 120.4,376.5 120.3,378.1 120.2,379.6 120.0,381.2 119.9,382.8 119.7,384.3 119.6,385.8 119.4,387.3 119.2,388.7 119.0,390.0 118.8,391.3 118.6,392.5 118.4,393.7 118.1,394.8 117.9,396.0 117.7,397.0 117.4,398.1 117.1,399.1 116.8,400.0 116.5,401.0 116.2,401.9 115.9,402.7 115.5,403.5 115.2,404.2 114.8,404.9 114.4,405.6 114.0,406.3 113.5,407.0 113.0,407.8 112.5,408.8 111.9,409.7 111.2,410.8 110.5,411.9 109.7,413.1 108.9,414.2 108.1,415.4 107.3,416.6 106.5,417.8 105.7,418.9 105.0,420.0 104.3,421.1 103.7,422.1 103.1,423.1 102.5,424.1 101.9,425.1 101.3,426.1 100.7,427.0 100.1,428.0 99.4,429.0 98.8,430.0 98.1,431.0 97.3,432.0 96.6,433.0 95.9,434.1 95.2,435.1 94.4,436.1 93.6,437.1 92.8,438.1 92.1,439.1 91.2,440.0 90.4,440.9 89.6,441.9 88.8,442.8 87.9,443.6 87.0,444.5 86.2,445.4 85.3,446.3 84.3,447.1 83.4,447.9 82.5,448.8 81.6,449.6 80.6,450.4 79.6,451.1 78.6,451.9 77.6,452.7 76.6,453.4 75.5,454.1 74.5,454.9 73.5,455.6 72.5,456.2 71.5,456.9 70.5,457.6 69.6,458.2 68.6,458.9 67.7,459.5 66.7,460.1 65.7,460.7 64.7,461.3 63.6,461.9 62.5,462.5 61.4,463.1 60.3,463.7 59.2,464.2 58.0,464.8 56.9,465.3 55.7,465.9 54.4,466.4 53.0,466.9 51.6,467.5 50.0,468.0 48.3,468.5 46.5,469.1 44.6,469.6 42.7,470.2 40.7,470.7 38.6,471.2 36.5,471.7 34.3,472.2 32.2,472.6 30.0,473.0 27.8,473.4 25.6,473.7 23.3,473.9 21.0,474.2 18.7,474.4 16.3,474.6 14.0,474.8 11.6,475.0 9.3,475.3 7.0,475.5 7.0,330.0"/>
<polygon fill="#aaff00" points="7.0,330.0 113.0,352.0 113.2,353.3 113.4,354.6 113.7,355.8 113.9,357.1 114.2,358.4 114.4,359.7 114.6,361.0 114.8,362.3 114.9,363.6 115.0,365.0 115.1,366.4 115.1,367.8 115.2,369.2 115.2,370.6 115.2,372.1 115.1,373.5 115.0,375.1 114.9,376.6 114.7,378.3 114.5,380.0 114.2,381.8 113.9,383.7 113.6,385.8 113.3,387.8 112.8,389.9 112.4,392.0 111.9,394.1 111.3,396.2 110.7,398.1 110.0,400.0 109.2,401.8 108.4,403.5 107.4,405.2 106.5,406.8 105.4,408.4 104.4,409.9 103.3,411.5 102.2,413.0 101.1,414.5 100.0,416.0 98.9,417.5 97.8,419.0 96.6,420.5 95.4,422.0 94.2,423.5 93.0,424.9 91.9,426.2 90.8,427.6 89.7,428.8 88.8,430.0 87.9,431.1 87.0,432.1 86.3,433.1 85.5,433.9 84.8,434.8 84.2,435.6 83.5,436.4 82.8,437.2 82.0,437.9 81.2,438.8 80.4,439.6 79.6,440.3 78.8,441.1 77.9,441.9 77.0,442.6 76.2,443.4 75.3,444.1 74.3,444.8 73.4,445.5 72.5,446.2 71.6,447.0 70.6,447.7 69.7,448.3 68.7,449.0 67.7,449.7 66.7,450.4 65.7,451.0 64.7,451.7 63.6,452.3 62.5,453.0 61.4,453.7 60.3,454.3 59.2,455.0 58.0,455.6 56.9,456.3 55.7,457.0 54.4,457.6 53.0,458.2 51.6,458.8 50.0,459.4 48.3,460.0 46.5,460.5 44.6,461.1 42.7,461.7 40.7,462.2 38.6,462.7 36.5,463.2 34.3,463.7 32.2,464.1 30.0,464.5 27.8,464.9 25.6,465.2 23.3,465.4 21.0,465.7 18.7,465.9 16.3,466.1 14.0,466.3 11.6,466.5 9.3,466.8 7.0,467.0 7.0,330.0"/>
<polygon fill="#eeff00" points="7.0,330.0 110.6,365.0 110.5,366.5 110.5,367.9 110.4,369.3 110.4,370.8 110.3,372.2 110.3,373.6 110.2,375.1 110.0,376.7 109.8,378.3 109.5,380.0 109.1,381.9 108.6,383.9 108.1,386.0 107.4,388.3 106.8,390.5 106.1,392.7 105.5,394.8 104.8,396.8 104.3,398.5 103.8,400.0 103.3,401.2 103.0,402.1 102.8,402.8 102.5,403.3 102.3,403.8 102.0,404.2 101.7,404.7 101.3,405.3 100.7,406.0 100.0,407.0 99.1,408.2 98.1,409.6 96.9,411.1 95.6,412.8 94.3,414.4 92.9,416.2 91.5,417.8 90.1,419.5 88.8,421.1 87.5,422.5 86.2,423.8 85.0,425.2 83.8,426.4 82.5,427.6 81.2,428.8 80.0,430.0 78.8,431.1 77.5,432.2 76.2,433.3 75.0,434.4 73.8,435.5 72.5,436.5 71.2,437.5 70.0,438.5 68.8,439.4 67.5,440.4 66.2,441.3 65.0,442.1 63.8,443.0 62.5,443.8 61.2,444.5 60.0,445.2 58.8,445.9 57.5,446.5 56.2,447.1 55.0,447.7 53.8,448.3 52.5,448.9 51.2,449.4 50.0,450.0 48.8,450.6 47.5,451.1 46.2,451.7 45.0,452.2 43.8,452.7 42.5,453.2 41.2,453.7 40.0,454.1 38.8,454.6 37.5,455.0 36.3,455.4 35.1,455.7 33.9,456.1 32.8,456.4 31.6,456.7 30.4,456.9 29.2,457.2 27.9,457.5 26.5,457.7 25.0,458.0 23.4,458.3 21.8,458.5 20.0,458.8 18.2,459.0 16.3,459.3 14.5,459.5 12.6,459.8 10.7,460.0 8.8,460.3 7.0,460.5 7.0,330.0"/>
<polygon fill="#ffcc00" points="7.0,330.0 101.0,383.0 100.7,384.7 100.4,386.4 100.2,388.2 99.9,389.9 99.7,391.6 99.4,393.3 99.0,395.0 98.6,396.7 98.1,398.4 97.5,400.0 96.8,401.6 96.0,403.2 95.1,404.7 94.1,406.2 93.1,407.8 92.0,409.2 90.9,410.7 89.8,412.2 88.6,413.6 87.5,415.0 86.4,416.4 85.2,417.8 83.9,419.2 82.7,420.5 81.4,421.8 80.1,423.1 78.8,424.4 77.5,425.7 76.3,426.9 75.0,428.0 73.8,429.1 72.5,430.2 71.2,431.2 70.0,432.2 68.8,433.1 67.5,434.1 66.2,435.0 65.0,435.8 63.8,436.7 62.5,437.5 61.2,438.3 60.0,439.1 58.8,439.8 57.5,440.5 56.2,441.2 55.0,441.9 53.8,442.6 52.5,443.2 51.2,443.8 50.0,444.4 48.8,445.0 47.5,445.6 46.2,446.1 45.0,446.6 43.8,447.1 42.5,447.6 41.2,448.1 40.0,448.6 38.8,449.0 37.5,449.4 36.3,449.8 35.1,450.2 33.9,450.5 32.8,450.9 31.6,451.2 30.4,451.5 29.2,451.7 27.9,452.0 26.5,452.3 25.0,452.5 23.4,452.7 21.8,452.9 20.0,453.1 18.2,453.2 16.3,453.4 14.5,453.5 12.6,453.6 10.7,453.7 8.8,453.9 7.0,454.0 7.0,330.0"/>
<polygon fill="#ff8800" points="7.0,330.0 90.0,398.0 89.5,399.2 89.1,400.4 88.7,401.6 88.2,402.8 87.8,404.0 87.4,405.2 86.9,406.4 86.3,407.6 85.7,408.8 85.0,410.0 84.2,411.2 83.4,412.5 82.4,413.8 81.5,415.1 80.5,416.3 79.4,417.6 78.3,418.9 77.2,420.1 76.1,421.3 75.0,422.5 73.9,423.6 72.7,424.8 71.4,425.9 70.2,427.0 68.9,428.1 67.6,429.1 66.3,430.2 65.0,431.2 63.8,432.1 62.5,433.0 61.2,433.9 60.0,434.7 58.8,435.4 57.5,436.2 56.2,436.9 55.0,437.6 53.8,438.2 52.5,438.8 51.2,439.4 50.0,440.0 48.8,440.5 47.5,441.1 46.2,441.5 45.0,442.0 43.8,442.4 42.5,442.8 41.2,443.2 40.0,443.6 38.8,444.0 37.5,444.4 36.3,444.8 35.1,445.2 33.9,445.6 32.8,446.0 31.6,446.4 30.4,446.8 29.2,447.1 27.9,447.5 26.5,447.7 25.0,448.0 23.4,448.2 21.8,448.4 20.0,448.5 18.2,448.6 16.3,448.7 14.5,448.7 12.6,448.8 10.7,448.8 8.8,448.9 7.0,449.0 7.0,330.0"/>
<polygon fill="#ff4400" points="7.0,330.0 70.0,417.5 69.3,418.5 68.6,419.4 67.9,420.4 67.2,421.3 66.6,422.3 65.9,423.3 65.1,424.2 64.3,425.2 63.5,426.1 62.5,427.0 61.5,427.9 60.3,428.8 59.1,429.8 57.9,430.7 56.6,431.6 55.2,432.5 53.9,433.4 52.6,434.2 51.3,434.9 50.0,435.6 48.8,436.2 47.5,436.8 46.2,437.2 45.0,437.7 43.8,438.1 42.5,438.5 41.2,438.9 40.0,439.2 38.8,439.6 37.5,440.0 36.3,440.4 35.1,440.8 33.9,441.3 32.8,441.7 31.6,442.1 30.4,442.5 29.2,442.8 27.9,443.2 26.5,443.5 25.0,443.8 23.4,444.0 21.8,444.2 20.0,444.3 18.2,444.4 16.3,444.5 14.5,444.6 12.6,444.7 10.7,444.8 8.8,444.9 7.0,445.0 7.0,330.0"/>
<polygon fill="#ff0000" points="7.0,330.0 36.0,433.0 35.6,433.4 35.2,433.7 34.9,434.1 34.5,434.4 34.2,434.8 33.8,435.2 33.4,435.5 33.0,435.9 32.5,436.2 32.0,436.5 31.4,436.8 30.8,437.1 30.1,437.3 29.4,437.6 28.6,437.8 27.9,438.1 27.1,438.3 26.4,438.5 25.7,438.8 25.0,439.0 24.4,439.2 23.8,439.5 23.3,439.7 22.8,439.9 22.3,440.2 21.8,440.4 21.2,440.6 20.6,440.7 19.8,440.9 19.0,441.0 18.0,441.1 17.0,441.1 15.8,441.1 14.6,441.1 13.4,441.1 12.1,441.1 10.8,441.1 9.5,441.0 8.2,441.0 7.0,441.0 7.0,330.0"/>
<path d="M7,51 L115.5,51 L115.5,328.0 A109.5,109.5 0 0 1 7,437.5 Z" fill="#000"/>
<path d="M115.5,783 V582.8 A36.8,36.8 0 0 1 152.3,546 H224.5 A108,108 0 0 1 332.5,654 V783 Z" fill="#000"/>
<path d="M115.5,51 L115.5,328.0 A109.5,109.5 0 0 1 7,437.5" fill="none" stroke="#0000ff" stroke-width="1"/>
<path d="M115.5,783 V582.8 A36.8,36.8 0 0 1 152.3,546 H224.5 A108,108 0 0 1 332.5,654 V783" fill="none" stroke="#0000ff" stroke-width="1"/>
<line x1="333.5" y1="648" x2="333.5" y2="783" stroke="#000" stroke-width="1"/>
<polyline fill="none" stroke="#ffff00" stroke-width="1" points="115.4,97.4 118.3,97.7 121.1,97.9 124.0,98.0 126.8,98.2 129.7,98.5 132.6,98.8 135.5,99.3 138.5,100.0 141.6,100.9 144.7,101.9 147.9,103.0 151.1,104.3 154.3,105.6 157.6,107.0 160.8,108.5 164.0,110.0 167.2,111.5 170.4,113.2 173.6,114.9 176.8,116.6 180.1,118.4 183.3,120.3 186.5,122.1 189.7,124.0 192.9,125.9 196.1,127.8 199.3,129.7 202.6,131.6 205.8,133.6 209.0,135.7 212.2,137.8 215.4,140.0 218.6,142.3 221.8,144.7 225.0,147.2 228.2,149.7 231.4,152.3 234.6,154.8 237.8,157.4 241.0,160.0 244.2,162.5 247.4,165.1 250.6,167.6 253.9,170.2 257.1,172.8 260.3,175.4 263.5,178.1 266.7,180.8 269.9,183.6 273.0,186.4 276.2,189.3 279.3,192.3 282.5,195.2 285.6,198.2 288.8,201.1 292.0,204.0 295.3,206.9 298.6,209.8 301.9,212.6 305.3,215.5 308.6,218.4 311.8,221.3 315.0,224.1 318.0,227.0 320.9,229.8 323.6,232.6 326.2,235.4 328.7,238.2 331.2,241.0 333.8,243.9 336.3,246.9 339.0,250.0 341.8,253.3 344.6,256.7 347.5,260.2 350.4,263.8 353.3,267.4 356.2,271.0 358.9,274.5 361.5,278.0 364.0,281.4 366.4,284.9 368.8,288.3 371.1,291.7 373.3,295.1 375.4,298.4 377.5,301.7 379.5,305.0 381.4,308.2 383.2,311.5 385.0,314.7 386.7,317.8 388.3,321.0 389.9,324.0 391.4,327.1 393.0,330.0 394.5,332.8 396.1,335.5 397.5,338.2 399.0,340.7 400.4,343.3 401.8,345.9 403.2,348.7 404.6,351.5 406.0,354.4 407.4,357.5 408.9,360.5 410.3,363.7 411.6,366.8 413.0,370.1 414.2,373.4 415.4,376.7 416.5,380.1 417.5,383.5 418.5,387.0 419.5,390.6 420.3,394.2 421.2,397.9 421.9,401.6 422.6,405.4 423.2,409.4 423.8,413.6 424.3,417.9 424.8,422.2 425.1,426.5 425.5,430.6 425.8,434.3 426.0,437.7 426.2,440.6 426.3,442.9 426.4,445.0 426.4,446.9 426.3,448.7 426.3,450.7 426.2,452.9 426.0,455.6 425.8,458.7 425.6,462.0 425.3,465.6 425.0,469.3 424.7,473.1 424.3,476.9 423.8,480.6 423.3,484.3 422.7,487.9 422.0,491.6 421.3,495.2 420.5,498.9 419.7,502.5 418.8,506.1 417.9,509.6 417.0,513.0 416.0,516.4 414.9,519.7 413.8,523.1 412.6,526.3 411.4,529.5 410.2,532.5 409.1,535.3 408.0,538.0 406.9,540.5 405.9,542.8 404.8,544.9 403.8,546.9 402.8,548.8 401.8,550.5 400.9,552.2 400.0,553.8 399.2,555.2 398.5,556.4 397.8,557.4 397.2,558.4 396.5,559.3 395.8,560.3 394.9,561.5 393.8,563.0 392.5,564.8 390.9,566.8 389.2,569.0 387.5,571.3 385.7,573.5 383.9,575.7 382.3,577.7 380.8,579.5 379.5,581.0 378.3,582.3 377.2,583.4 376.2,584.4 375.1,585.4 374.1,586.4 373.0,587.4 371.8,588.5 370.5,589.7 369.2,590.9 367.9,592.2 366.5,593.4 365.1,594.6 363.8,595.8 362.4,597.0 361.0,598.0 359.6,599.0 358.3,599.8 357.0,600.7 355.6,601.4 354.3,602.2 352.9,602.9 351.5,603.7 350.0,604.5 348.5,605.3 346.9,606.1 345.2,607.0 343.6,607.8 341.9,608.6 340.2,609.4 338.6,610.2 337.0,611.0 335.5,611.7 333.9,612.4 332.4,613.1 330.9,613.8 329.5,614.5 328.0,615.1 326.5,615.8 325.0,616.5"/>
<polyline fill="none" stroke="#ffff00" stroke-width="1" points="115.4,211.0 119.9,211.4 124.5,211.7 129.2,212.0 133.8,212.3 138.4,212.6 142.8,213.0 147.0,213.5 151.0,214.0 154.7,214.6 158.2,215.3 161.5,216.0 164.6,216.8 167.7,217.6 170.8,218.5 173.8,219.5 177.0,220.5 180.3,221.6 183.5,222.8 186.9,224.1 190.1,225.4 193.4,226.8 196.6,228.1 199.7,229.5 202.6,230.8 205.4,232.1 208.1,233.3 210.6,234.4 213.1,235.6 215.6,236.9 218.0,238.2 220.5,239.5 223.0,241.0 225.5,242.6 228.1,244.2 230.6,246.0 233.1,247.7 235.7,249.6 238.3,251.5 240.9,253.4 243.6,255.4 246.4,257.4 249.1,259.4 252.0,261.4 254.8,263.4 257.7,265.6 260.7,267.9 263.7,270.3 266.7,273.0 269.8,276.0 273.1,279.2 276.5,282.7 279.8,286.2 283.2,289.8 286.4,293.4 289.5,296.8 292.3,300.0 294.9,303.0 297.3,305.8 299.6,308.5 301.8,311.1 303.9,313.7 305.9,316.4 307.9,319.1 310.0,322.0 312.1,325.0 314.1,328.1 316.1,331.3 318.1,334.5 320.0,337.7 321.9,341.0 323.8,344.3 325.6,347.7 327.4,351.2 329.2,354.9 330.9,358.7 332.6,362.5 334.2,366.2 335.8,369.7 337.2,373.0 338.5,376.0 339.6,378.6 340.6,380.9 341.5,383.0 342.3,385.0 343.0,386.8 343.7,388.5 344.3,390.2 345.0,392.0 345.7,393.7 346.3,395.2 346.8,396.7 347.3,398.1 347.9,399.6 348.4,401.2 348.9,403.0 349.5,405.0 350.1,407.3 350.8,409.8 351.4,412.5 352.1,415.3 352.8,418.2 353.4,421.1 353.9,424.1 354.4,427.0 354.8,429.9 355.2,432.9 355.5,435.9 355.8,438.9 356.0,442.0 356.2,445.1 356.3,448.2 356.4,451.3 356.4,454.4 356.4,457.6 356.3,460.8 356.1,464.1 355.9,467.3 355.7,470.5 355.4,473.8 355.0,477.0 354.5,480.3 354.0,483.6 353.4,487.0 352.7,490.3 352.0,493.6 351.3,496.8 350.6,499.8 350.0,502.6 349.4,505.2 348.9,507.6 348.3,509.9 347.8,512.0 347.2,514.1 346.7,516.1 346.1,518.0 345.4,520.0 344.7,521.9 344.0,523.7 343.2,525.5 342.4,527.2 341.6,528.9 340.7,530.6 339.9,532.3 339.0,534.0 338.2,535.7 337.3,537.4 336.5,539.0 335.7,540.7 334.8,542.4 333.8,544.1 332.7,545.9 331.4,547.8 329.9,549.8 328.3,552.0 326.5,554.2 324.7,556.5 322.8,558.8 320.9,561.1 319.1,563.2 317.4,565.3 315.8,567.2 314.2,569.1 312.6,570.9 311.1,572.6 309.6,574.3 308.1,576.0 306.5,577.7 305.0,579.5"/>
<polyline fill="none" stroke="#ffff00" stroke-width="1" points="115.4,298.5 118.3,298.6 121.1,298.7 124.0,298.8 126.8,298.9 129.7,299.0 132.6,299.2 135.5,299.5 138.5,300.0 141.6,300.6 144.7,301.2 147.9,302.0 151.1,302.8 154.3,303.7 157.6,304.7 160.8,305.8 164.0,307.0 167.2,308.3 170.4,309.7 173.6,311.2 176.8,312.7 180.1,314.4 183.3,316.0 186.5,317.8 189.7,319.5 193.0,321.3 196.3,323.2 199.7,325.1 203.1,327.1 206.4,329.1 209.5,331.1 212.6,333.1 215.4,335.0 218.0,336.9 220.4,338.7 222.7,340.5 224.8,342.3 226.9,344.2 228.9,346.1 230.9,348.0 233.0,350.0 235.1,352.1 237.1,354.3 239.2,356.5 241.1,358.8 243.1,361.1 245.0,363.4 246.9,365.7 248.7,368.0 250.5,370.3 252.3,372.6 254.0,374.9 255.7,377.2 257.3,379.5 258.8,381.7 260.2,383.9 261.5,386.0 262.6,388.0 263.6,389.9 264.4,391.8 265.1,393.6 265.8,395.4 266.5,397.2 267.2,399.1 268.0,401.0 268.9,403.0 269.8,405.0 270.7,407.0 271.7,409.0 272.6,411.0 273.4,413.0 274.3,415.0 275.0,417.0 275.6,418.9 276.2,420.7 276.7,422.5 277.2,424.3 277.6,426.1 278.0,428.0 278.5,429.9 279.0,432.0 279.5,434.2 280.1,436.4 280.7,438.6 281.3,441.0 281.8,443.4 282.4,445.9 282.9,448.6 283.3,451.3 283.7,454.2 284.1,457.3 284.4,460.5 284.7,463.8 285.0,467.1 285.2,470.4 285.4,473.7 285.4,477.0 285.4,480.2 285.2,483.4 285.1,486.6 284.8,489.8 284.5,493.0 284.1,496.2 283.7,499.4 283.3,502.6 282.8,505.8 282.3,508.9 281.7,512.1 281.1,515.2 280.4,518.4 279.7,521.5 278.9,524.7 278.0,528.0 277.1,531.3 276.0,534.6 274.9,538.0 273.7,541.4 272.5,544.8 271.3,548.2 270.2,551.6 269.0,555.0"/>
<polyline fill="none" stroke="#ffff00" stroke-width="1" points="114.0,344.6 117.1,345.2 120.1,345.8 123.1,346.3 126.2,346.8 129.2,347.4 132.3,348.1 135.4,349.0 138.5,350.0 141.7,351.2 144.9,352.7 148.2,354.2 151.5,355.9 154.8,357.6 157.9,359.4 161.0,361.2 164.0,363.0 166.8,364.8 169.6,366.6 172.2,368.5 174.8,370.4 177.3,372.4 179.7,374.4 182.2,376.4 184.6,378.5 187.0,380.6 189.4,382.7 191.8,384.9 194.1,387.1 196.3,389.4 198.5,391.7 200.6,394.0 202.6,396.4 204.5,398.8 206.2,401.3 207.9,403.8 209.5,406.4 211.0,409.0 212.5,411.6 214.0,414.3 215.4,417.0 216.8,419.8 218.3,422.9 219.7,426.0 221.1,429.1 222.4,432.1 223.6,435.0 224.6,437.7 225.6,440.0 226.4,441.9 227.0,443.3 227.4,444.5 227.8,445.5 228.1,446.5 228.5,447.7 228.9,449.3 229.5,451.3 230.2,453.8 231.0,456.7 231.9,459.9 232.8,463.3 233.7,466.7 234.6,470.2 235.3,473.7 236.0,477.0 236.6,480.2 237.1,483.4 237.5,486.6 237.9,489.8 238.3,493.0 238.6,496.2 238.8,499.4 239.0,502.6 239.1,505.8 239.1,509.1 239.1,512.4 239.0,515.7 238.9,519.0 238.8,522.1 238.6,525.1 238.5,528.0 238.4,530.7 238.2,533.2 238.0,535.6 237.8,537.9 237.6,540.2 237.4,542.4 237.2,544.7 237.0,547.0"/>
<polyline fill="none" stroke="#ffff00" stroke-width="1" points="101.0,383.4 102.6,384.0 104.3,384.6 105.9,385.2 107.6,385.7 109.2,386.3 110.8,387.0 112.4,387.8 114.0,388.7 115.5,389.7 116.8,390.7 118.2,391.8 119.5,393.0 120.8,394.3 122.3,395.7 123.8,397.3 125.6,399.0 127.6,400.9 129.8,403.1 132.1,405.4 134.6,407.8 137.0,410.3 139.4,412.8 141.8,415.2 144.0,417.5 146.1,419.7 148.1,421.9 150.2,424.0 152.1,426.1 154.0,428.3 155.9,430.4 157.7,432.7 159.5,435.0 161.2,437.4 162.8,439.8 164.4,442.3 166.0,444.8 167.5,447.4 169.0,450.0 170.5,452.8 172.0,455.6 173.6,458.5 175.2,461.6 176.8,464.7 178.4,468.0 180.0,471.2 181.5,474.5 182.8,477.8 184.0,481.0 185.0,484.2 186.0,487.5 186.8,490.7 187.5,494.0 188.1,497.3 188.7,500.5 189.2,503.8 189.7,507.0 190.2,510.3 190.5,513.7 190.9,517.1 191.1,520.5 191.3,523.9 191.5,527.0 191.7,530.0 191.8,532.6 191.9,534.9 191.9,536.9 191.9,538.7 191.8,540.4 191.7,541.9 191.6,543.4 191.6,545.0 191.5,546.7"/>
<polyline fill="none" stroke="#ffff00" stroke-width="1" points="72.0,416.0 73.3,417.9 74.5,419.8 75.8,421.6 77.1,423.5 78.4,425.4 79.6,427.2 80.8,429.1 82.0,431.0 83.1,432.9 84.0,434.7 85.0,436.5 85.9,438.4 86.8,440.2 87.8,442.1 88.8,444.0 90.0,446.0 91.3,448.0 92.8,450.2 94.4,452.3 96.1,454.5 97.7,456.7 99.3,458.8 100.7,461.0 102.0,463.0 103.1,465.0 104.1,466.9 105.0,468.8 105.9,470.7 106.6,472.6 107.4,474.4 108.2,476.2 109.0,478.0 109.8,479.7 110.6,481.2 111.3,482.6 112.0,484.1 112.8,485.6 113.6,487.3 114.5,489.2 115.4,491.5 116.5,494.1 117.6,497.1 118.9,500.4 120.2,503.8 121.5,507.3 122.7,510.7 123.9,514.0 125.0,517.0 126.0,519.9 126.9,522.7 127.7,525.5 128.6,528.3 129.3,530.9 130.1,533.3 130.8,535.6 131.5,537.7 132.2,539.5 132.8,541.1 133.4,542.5 134.0,543.7 134.5,544.9 135.1,546.0 135.6,547.2 136.2,548.5"/>
<polyline fill="none" stroke="#ffff00" stroke-width="1" points="34.7,435.0 35.4,437.5 36.0,440.1 36.7,442.6 37.4,445.2 38.1,447.7 38.7,450.2 39.4,452.6 40.0,455.0 40.6,457.2 41.2,459.2 41.7,461.2 42.2,463.1 42.8,465.1 43.3,467.2 43.9,469.5 44.5,472.0 45.1,474.8 45.8,477.8 46.4,480.9 47.1,484.2 47.7,487.6 48.5,491.1 49.2,494.5 50.0,498.0 50.8,501.5 51.6,505.1 52.5,508.8 53.4,512.6 54.3,516.3 55.3,520.1 56.4,523.8 57.5,527.4 58.8,531.0 60.1,534.7 61.6,538.4 63.1,542.1 64.6,545.6 66.1,549.1 67.6,552.5 69.0,555.6 70.3,558.6 71.6,561.4 72.8,564.0 74.0,566.6 75.2,569.1 76.5,571.4 78.0,573.7 79.5,576.0 81.2,578.2 82.9,580.4 84.7,582.5 86.6,584.6 88.6,586.5 90.7,588.3 92.8,590.0 95.0,591.5 97.3,592.8 99.8,593.9 102.3,594.8 104.9,595.6 107.5,596.4 110.2,597.1 112.8,597.9 115.4,598.7"/>
<polyline fill="none" stroke="#ffff00" stroke-width="1" points="15.4,436.4 15.9,442.0 16.3,447.7 16.8,453.4 17.2,459.1 17.7,464.7 18.2,470.3 18.6,475.7 19.0,481.0 19.4,486.1 19.7,491.1 20.1,496.0 20.4,500.7 20.7,505.5 21.0,510.2 21.4,514.9 21.8,519.7 22.2,524.5 22.7,529.5 23.1,534.4 23.6,539.3 24.1,544.1 24.6,548.9 25.1,553.5 25.6,558.0 26.1,562.3 26.6,566.5 27.0,570.5 27.5,574.5 28.0,578.4 28.6,582.3 29.2,586.1 30.0,590.0 30.9,593.9 31.9,597.7 32.9,601.5 34.0,605.3 35.2,609.1 36.4,612.8 37.7,616.4 39.0,620.0 40.3,623.5 41.7,627.0 43.1,630.5 44.6,633.9 46.1,637.2 47.7,640.5 49.3,643.8 51.0,647.0 52.7,650.2 54.5,653.4 56.3,656.5 58.1,659.7 60.0,662.7 62.0,665.6 64.0,668.4 66.0,671.0 68.1,673.5 70.3,675.8 72.5,678.1 74.8,680.2 77.1,682.2 79.4,684.1 81.7,685.8 84.0,687.5 86.3,689.0 88.6,690.4 90.9,691.7 93.3,692.9 95.6,694.0 97.8,694.9 100.0,695.8 102.0,696.5 103.9,697.1 105.7,697.5 107.4,697.8 109.0,698.0 110.6,698.1 112.2,698.2 113.8,698.4 115.5,698.6"/>
<path d="M115.0,56.5L117.8,56.5M115.0,63.8L117.9,63.8M115.0,71.1L118.0,71.1M115.0,78.4L118.1,78.4M115.0,85.6L118.2,85.6M115.0,92.9L118.3,92.9M115.0,100.2L118.4,100.2M115.0,107.5L118.6,107.5M115.0,114.8L118.8,114.8M115.0,122.1L118.9,122.1M115.0,129.4L119.1,129.4M115.0,136.6L119.3,136.6M115.0,143.9L119.4,143.9M115.0,151.2L119.6,151.2M115.0,158.5L119.7,158.5M115.0,165.8L119.8,165.8M115.0,173.1L119.9,173.1M115.0,180.4L120.1,180.4M115.0,187.6L120.2,187.6M115.0,194.9L120.3,194.9M115.0,202.2L120.4,202.2M115.0,209.5L120.6,209.5M115.0,216.8L120.7,216.8M115.0,224.1L120.9,224.1M115.0,231.4L121.1,231.4M115.0,238.7L121.4,238.7M115.0,245.9L121.6,245.9M115.0,253.2L121.8,253.2M115.0,260.5L122.1,260.5M115.0,267.8L122.6,267.8M115.0,275.1L123.0,275.1M115.0,282.4L123.4,282.4M115.0,289.7L123.9,289.7M115.0,296.9L124.3,296.9M115.0,304.2L124.7,304.2M115.0,311.5L125.3,311.5M115.0,318.8L125.8,318.8M115.0,326.1L126.5,326.1M114.7,332.1L126.8,332.5M114.2,339.5L126.9,340.8M113.2,346.8L126.3,349.1M111.6,354.0L125.2,357.4M109.6,361.1L123.7,365.6M107.1,368.1L121.4,373.8M104.2,374.9L118.5,381.7M100.8,381.5L115.0,389.5M96.9,387.8L111.1,397.1M92.6,393.8L106.6,404.4M88.0,399.6L101.5,411.4M82.9,405.0L95.9,418.0M77.5,410.0L89.8,424.2M71.7,414.7L83.4,430.0M65.7,419.0L76.4,435.3M59.4,422.8L69.1,440.0M52.8,426.2L61.4,444.3M46.0,429.2L53.5,448.1M39.1,431.7L45.3,451.3M31.9,433.7L36.9,454.0M24.7,435.2L28.3,456.1M17.4,436.2L19.6,457.6M10.0,436.7L10.8,458.6M115.0,592.0L118.0,592.0M115.0,606.5L117.5,606.5M115.0,621.0L117.0,621.0M115.0,635.5L116.5,635.5M115.0,650.0L116.1,650.0M115.0,664.5L116.0,664.5M115.0,679.0L116.0,679.0M115.0,693.5L116.0,693.5M115.0,708.0L116.0,708.0M115.0,722.5L116.0,722.5M115.0,737.0L116.0,737.0M115.0,751.5L116.0,751.5M115.0,766.0L116.0,766.0M115.0,780.5L116.0,780.5M115.8,579.6L119.7,580.9M116.7,572.5L122.8,574.7M119.3,566.4L125.9,569.9M123.2,560.3L129.8,566.0M128.5,555.0L135.1,562.9M134.2,551.0L139.9,560.7M140.4,548.0L143.9,558.5M147.4,547.1L148.7,556.8M155.7,546.2L154.4,555.9M162.6,546.0L162.6,554.8M169.8,546.0L169.8,554.8M176.9,546.0L176.9,554.8M184.1,546.0L184.1,554.8M191.2,546.0L191.2,554.8M198.4,546.0L198.4,554.8M205.5,546.0L205.5,554.0M212.7,546.0L212.7,554.0M219.8,546.0L219.8,554.0M226.4,546.0L226.3,554.4M233.4,546.4L232.8,554.5M240.4,547.2L239.2,555.0M247.3,548.4L245.7,555.9M254.1,550.1L252.1,557.2M260.7,552.3L258.4,558.9M267.2,554.8L264.5,561.1M273.6,557.8L270.6,563.6M279.7,561.2L276.5,566.6M285.6,564.9L282.2,569.9M291.2,569.1L287.7,573.6M296.6,573.6L292.9,577.7M301.7,578.4L297.9,582.1M306.4,583.6L302.6,586.9M310.8,589.0L307.0,591.9M314.8,594.8L311.0,597.2M318.5,600.7L314.7,602.8M321.7,606.9L318.1,608.7M324.6,613.3L321.0,614.8M327.0,619.9L323.6,621.0M329.0,626.6L325.8,627.4M330.5,633.4L327.5,634.0M331.6,640.3L328.8,640.7M332.3,647.3L329.6,647.5M333.0,662.0L331.0,662.0M333.0,669.4L331.0,669.4M333.0,676.8L331.0,676.8M333.0,684.2L331.0,684.2M333.0,691.6L331.0,691.6M333.0,699.0L331.0,699.0M333.0,706.4L331.0,706.4M333.0,713.8L331.0,713.8M333.0,721.2L331.0,721.2M333.0,728.6L331.0,728.6M333.0,736.0L331.0,736.0M333.0,743.4L331.0,743.4M333.0,750.8L331.0,750.8M333.0,758.2L331.0,758.2M333.0,765.6L331.0,765.6M333.0,773.0L331.0,773.0M333.0,780.4L331.0,780.4" stroke="#ff0000" stroke-width="1" fill="none"/>
</g>
<line x1="6.5" y1="51" x2="6.5" y2="783" stroke="#ffc000" stroke-width="1" stroke-dasharray="11 9"/>
<polygon shape-rendering="auto" points="265.8,427.6 265.8,443.4 267.4,444.7 271.9,440.7 277.8,439.8 278.9,438.2" fill="#000" stroke="#fff" stroke-width="1.5" stroke-linejoin="round"/>
<rect x="690" y="197" width="30" height="34" fill="#ff0000"/>
<rect x="690" y="231" width="30" height="34" fill="#ff4400"/>
<rect x="690" y="265" width="30" height="34" fill="#ff8800"/>
<rect x="690" y="299" width="30" height="34" fill="#ffcc00"/>
<rect x="690" y="333" width="30" height="34" fill="#eeff00"/>
<rect x="690" y="367" width="30" height="34" fill="#aaff00"/>
<rect x="690" y="401" width="30" height="34" fill="#66ff00"/>
<rect x="690" y="435" width="30" height="34" fill="#22ff00"/>
<rect x="690" y="469" width="30" height="34" fill="#00ff22"/>
<rect x="690" y="503" width="30" height="34" fill="#00ff66"/>
<rect x="690" y="537" width="30" height="34" fill="#00ffaa"/>
<rect x="690" y="571" width="30" height="34" fill="#00ffee"/>
<rect x="690" y="605" width="30" height="34" fill="#00ccff"/>
<rect x="690" y="639" width="30" height="34" fill="#0088ff"/>
<rect x="690" y="673" width="30" height="34" fill="#0044ff"/>
<rect x="690" y="707" width="30" height="34" fill="#0000ff"/>
<filter id="na" x="-5%" y="-20%" width="110%" height="140%" color-interpolation-filters="sRGB"><feComponentTransfer><feFuncA type="discrete" tableValues="0 0 1 1"/></feComponentTransfer></filter>
<g font-family="'Liberation Sans', sans-serif" font-size="12px" letter-spacing="0.33" fill="#ffff00" text-rendering="geometricPrecision" filter="url(#na)">
<text x="700" y="156.3" letter-spacing="0">E-Field</text>
<text x="740" y="176.3">*1E+4</text>
<text x="740" y="196.3">5,09996</text>
<text x="740" y="230.3">4,78121</text>
<text x="740" y="264.3">4,46246</text>
<text x="740" y="298.3">4,14371</text>
<text x="740" y="332.3">3,82497</text>
<text x="740" y="366.3">3,50622</text>
<text x="740" y="400.3">3,18747</text>
<text x="740" y="434.3">2,86873</text>
<text x="740" y="468.3">2,54998</text>
<text x="740" y="502.3">2,23123</text>
<text x="740" y="536.3">1,91248</text>
<text x="740" y="570.3">1,59374</text>
<text x="740" y="604.3">1,27499</text>
<text x="740" y="638.3">0,95624</text>
<text x="740" y="672.3">0,63749</text>
<text x="740" y="706.3">0,31875</text>
<text x="740" y="740.3">0</text>
</g>
</svg>
<svg id="pn" width="175" height="732" viewBox="800 51 175 732"><rect x="800" y="51" width="175" height="732" fill="#efefef"/>
<g font-family="'Liberation Sans', sans-serif" font-size="12.9px" font-weight="bold" fill="#141414" style="white-space:pre">
<text x="857.50" y="83.0" textLength="60.00" lengthAdjust="spacingAndGlyphs" fill="#0a0af5">UNITS: &#160;SI</text>
<text x="854.50" y="127.0" textLength="64.75" lengthAdjust="spacingAndGlyphs">Length : m</text>
<text x="850.00" y="171.0" textLength="73.75" lengthAdjust="spacingAndGlyphs">Potential : V</text>
<text x="856.25" y="214.9" textLength="61.25" lengthAdjust="spacingAndGlyphs">Charge : C</text>
<text x="831.25" y="258.9" textLength="111.25" lengthAdjust="spacingAndGlyphs">Conductivity : S/m</text>
<text x="848.00" y="302.9" textLength="74.00" lengthAdjust="spacingAndGlyphs" fill="#0a0af5">INPUT DATA</text>
<text x="821.25" y="346.9" textLength="131.75" lengthAdjust="spacingAndGlyphs">Model : &#160;20kV_Trenner</text>
<text x="826.25" y="390.9" textLength="121.25" lengthAdjust="spacingAndGlyphs">Analysis : capacitive</text>
<text x="833.00" y="434.8" textLength="107.75" lengthAdjust="spacingAndGlyphs">CS : axisymmetric</text>
<text x="833.75" y="478.8" textLength="106.25" lengthAdjust="spacingAndGlyphs">Image : &#160;no image</text>
<text x="839.50" y="522.8" textLength="96.75" lengthAdjust="spacingAndGlyphs">Dimension : 318</text>
<text x="854.50" y="566.8" textLength="65.00" lengthAdjust="spacingAndGlyphs">Regions : 5</text>
<text x="836.25" y="610.8" textLength="110.50" lengthAdjust="spacingAndGlyphs">Voltage = 1.00e+03</text>
<text x="859.80" y="654.7" textLength="50.60" lengthAdjust="spacingAndGlyphs" fill="#0a0af5">RESULTS</text>
<text x="839.60" y="698.7" textLength="97.20" lengthAdjust="spacingAndGlyphs">Emax = 5.10e+04</text>
<text x="818.20" y="715.7" textLength="139.30" lengthAdjust="spacingAndGlyphs">at x = 0.00102 ; y = 0.155</text>
</g></svg>
</body></html>
